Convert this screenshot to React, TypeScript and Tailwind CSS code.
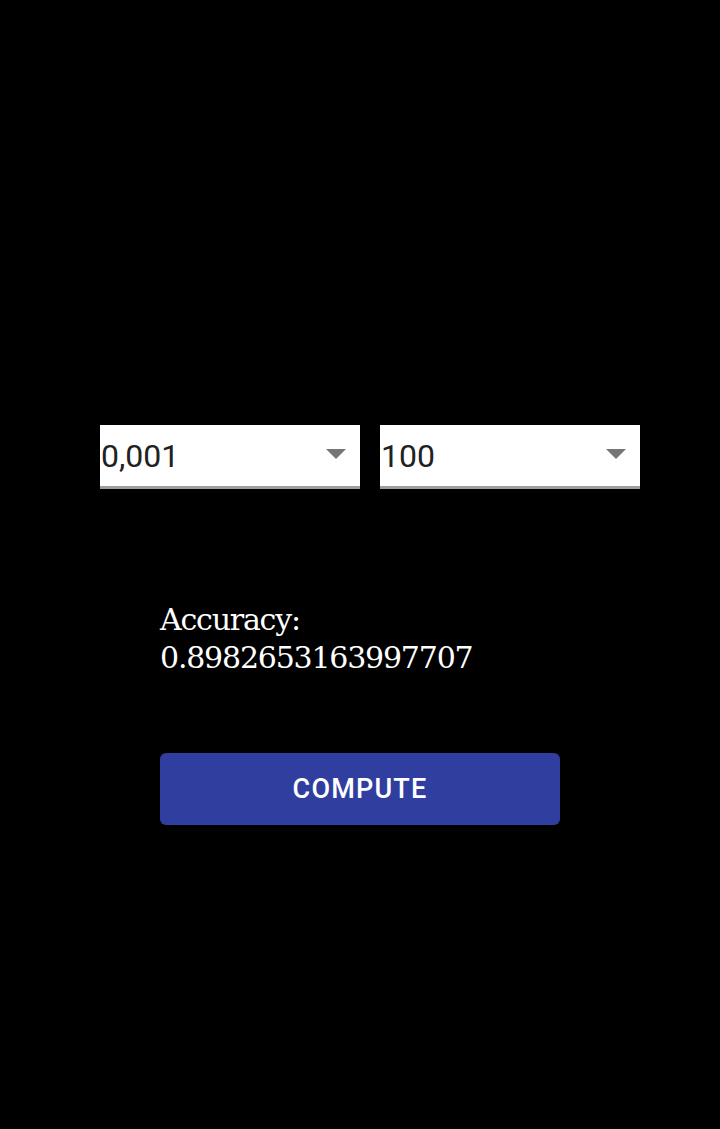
import React from "react";

function Spinner({ value }: { value: string }) {
  return (
    <div className="flex-1 flex flex-col">
      <div className="h-[61px] bg-white flex items-center justify-between pl-[1px] pr-[14px]">
        <span className="text-[32px] leading-none text-[#212121]" style={{ fontFamily: "Roboto, sans-serif" }}>
          {value}
        </span>
        <svg width="20" height="10" viewBox="0 0 20 10" className="mt-[-3px]">
          <polygon points="0,0 20,0 10,10" fill="#757575" />
        </svg>
      </div>
      <div className="h-[3px] bg-[#9e9e9e]" />
    </div>
  );
}

export default function App() {
  return (
    <div className="w-full h-[1129px] bg-black flex flex-col">
      <div className="pt-[425px] pl-[100px] pr-[80px] flex gap-[20px]">
        <Spinner value="0,001" />
        <Spinner value="100" />
      </div>
      <div
        className="mt-[112px] pl-[160px] text-white text-[30px] leading-[38px] tracking-[-1.2px]"
        style={{ fontFamily: "'DejaVu Serif', serif" }}
      >
        <div>Accuracy:</div>
        <div>0.8982653163997707</div>
      </div>
      <div className="mt-[76px] pl-[160px]">
        <button
          className="w-[400px] h-[72px] rounded-[6px] bg-[#303F9F] text-white text-[27px] font-medium tracking-[1.2px]"
          style={{ fontFamily: "Roboto, sans-serif" }}
        >
          COMPUTE
        </button>
      </div>
    </div>
  );
}
